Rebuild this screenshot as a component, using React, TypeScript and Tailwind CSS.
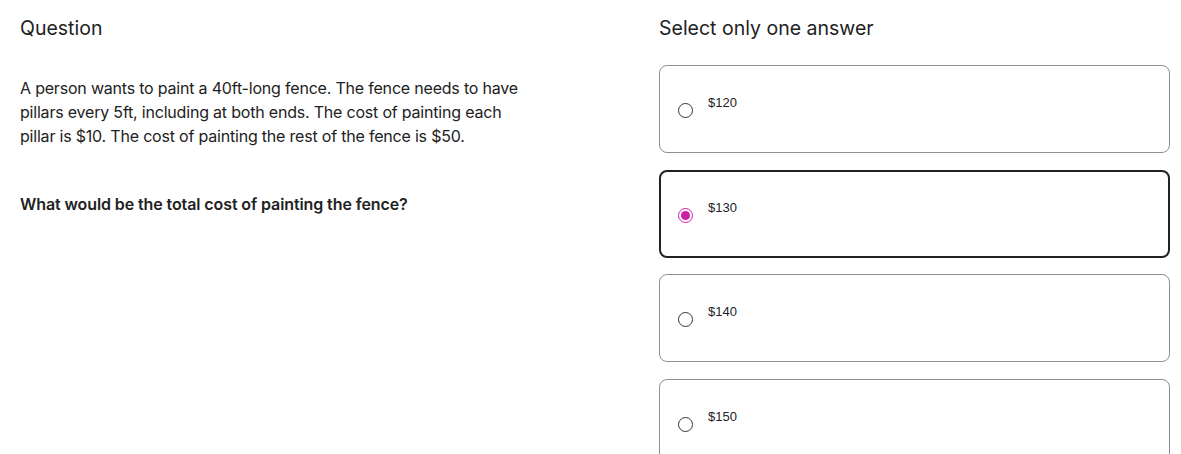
import React, { useState } from 'react';

const options = ['$120', '$130', '$140', '$150'];

const App = () => {
  const [selected, setSelected] = useState(1);

  return (
    <div className="w-[1181px] h-[454px] overflow-hidden bg-white text-[#1f1f1f] font-['Inter','Liberation_Sans',sans-serif]">
      <div className="flex">
        {/* Question column */}
        <section className="w-[659px] pl-[20px] pr-[40px] pt-[16px]">
          <h2 className="text-[19.5px] leading-[24px] text-[#222]">Question</h2>
          <p className="mt-[36px] w-[520px] text-[16px] leading-[24px] tracking-[-0.2px] text-[#222]">
            A person wants to paint a 40ft-long fence. The fence needs to have pillars every 5ft, including at both ends. The cost of painting each pillar is $10. The cost of painting the rest of the fence is $50.
          </p>
          <p className="mt-[44px] text-[16px] leading-[24px] font-semibold tracking-[-0.1px] text-[#222]">
            What would be the total cost of painting the fence?
          </p>
        </section>

        {/* Answers column */}
        <section className="w-[511px] pt-[16px]">
          <h2 className="text-[19.5px] leading-[24px] text-[#222]">Select only one answer</h2>
          <div className="mt-[25px] flex flex-col gap-[16.5px]">
            {options.map((opt, i) => {
              const active = i === selected;
              return (
                <button
                  key={opt}
                  onClick={() => setSelected(i)}
                  className={
                    active
                      ? 'h-[88px] shrink-0 rounded-[8px] border-2 border-[#222] bg-white px-[17px] pt-[28px] flex items-start text-left'
                      : 'h-[88px] shrink-0 rounded-[8px] border border-[#8f8f8f] bg-white px-[18px] pt-[29px] flex items-start text-left'
                  }
                >
                  <span
                    className={
                      active
                        ? 'mt-[8px] w-[15px] h-[15px] rounded-full border-[1.5px] border-[#cc1fa8] flex items-center justify-center shrink-0'
                        : 'mt-[8px] w-[15px] h-[15px] rounded-full border-[1.5px] border-[#333] shrink-0'
                    }
                  >
                    {active && <span className="w-[9px] h-[9px] rounded-full bg-[#cc1fa8]" />}
                  </span>
                  <span className="ml-[15px] text-[13px] leading-[16px] font-medium text-[#222] font-['Liberation_Sans',sans-serif]">
                    {opt}
                  </span>
                </button>
              );
            })}
          </div>
        </section>
      </div>
    </div>
  );
};

export default App;
